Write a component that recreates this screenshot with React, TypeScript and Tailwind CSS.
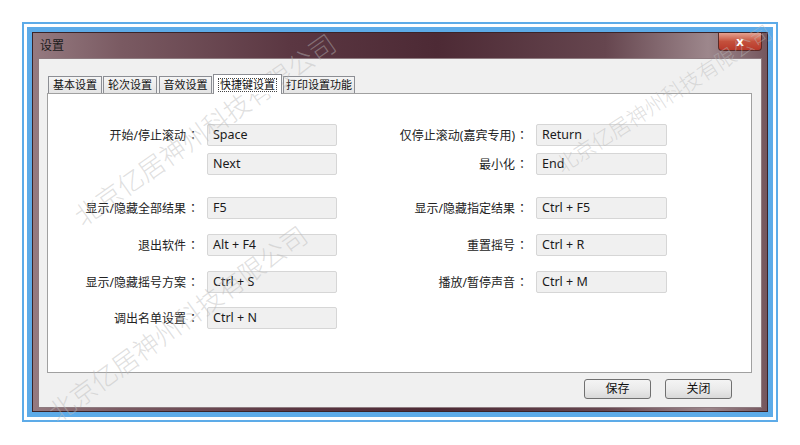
import type { ReactNode } from 'react'

type Row = {
  mt: string
  left: [string, string]
  right: [string, string] | null
}

const rows: Row[] = [
  { mt: 'mt-[30px]', left: ['开始/停止滚动', 'Space'], right: ['仅停止滚动(嘉宾专用)', 'Return'] },
  { mt: 'mt-[7px]', left: ['', 'Next'], right: ['最小化', 'End'] },
  { mt: 'mt-[22px]', left: ['显示/隐藏全部结果', 'F5'], right: ['显示/隐藏指定结果', 'Ctrl + F5'] },
  { mt: 'mt-[15px]', left: ['退出软件', 'Alt + F4'], right: ['重置摇号', 'Ctrl + R'] },
  { mt: 'mt-[15px]', left: ['显示/隐藏摇号方案', 'Ctrl + S'], right: ['播放/暂停声音', 'Ctrl + M'] },
  { mt: 'mt-[14px]', left: ['调出名单设置', 'Ctrl + N'], right: null },
]

const tabs = [
  { label: '基本设置', cls: 'ml-[1px] w-[54px]' },
  { label: '轮次设置', cls: 'ml-[1px] w-[54px]' },
  { label: '音效设置', cls: 'ml-[2px] w-[53px]' },
  { label: '快捷键设置', cls: 'ml-[1px] w-[69px]', active: true },
  { label: '打印设置功能', cls: 'ml-[1px] w-[72px]' },
]

function Label({ text, width }: { text: string; width: string }) {
  return (
    <div className={`${width} whitespace-nowrap text-right`}>
      {text && (
        <>
          {text}
          <span className="inline-block w-[14px] text-center font-['Noto_Sans_CJK_TC',sans-serif]">：</span>
        </>
      )}
    </div>
  )
}

function KeyBox({ value, width }: { value: string; width: string }) {
  return (
    <div
      className={`flex h-[22px] ${width} items-center rounded-[2px] border border-[#d6d6d6] bg-[#f0f0f0] px-[5px] text-[12.5px] text-[#1a1a1a]`}
    >
      {value}
    </div>
  )
}

function Watermark({ x, y, angle, size }: { x: string; y: string; angle: string; size: string }) {
  return (
    <div className={`pointer-events-none absolute ${x} ${y} h-0 w-0`}>
      <span
        className={`absolute left-0 top-0 -translate-x-1/2 -translate-y-1/2 ${angle} ${size} whitespace-nowrap font-light text-[rgba(185,185,185,0.45)]`}
      >
        北京亿居神州科技有限公司
      </span>
    </div>
  )
}

function Button({ children }: { children: ReactNode }) {
  return (
    <button
      type="button"
      className="flex h-[20px] w-[67px] items-center justify-center rounded-[3px] border border-[#707070] bg-gradient-to-b from-[#f4f4f4] via-[#ebebeb] to-[#d9d9d9] text-[12px] text-[#111]"
    >
      {children}
    </button>
  )
}

export default function App() {
  return (
    <div className="relative h-[445px] w-[800px] overflow-hidden bg-white pl-[22px] pt-[22px] font-['Noto_Sans','Noto_Sans_CJK_SC',sans-serif]">
      <div className="h-[400px] w-[756px] border-2 border-[#5dabe8] p-[3px]">
        <div className="h-full w-full border-[5px] border-[#5dabe8]">
          {/* window */}
          <div className="flex h-full w-full flex-col border border-[#3a2429] bg-[linear-gradient(90deg,#957a80_0%,#7a5a62_12%,#5b3742_35%,#4d2a35_55%,#66464f_78%,#9d878c_92%,#75575e_100%)] px-[5px] pb-[3px]">
            <div className="flex h-[25px] shrink-0 items-start justify-between">
              <span className="mt-[6px] pl-[2px] text-[12px] leading-[14px] text-[#1c1c1c]">设置</span>
              <div className="flex h-[18px] w-[44px] items-center justify-center rounded-b-[4px] border border-t-0 border-[#5a2a26] bg-gradient-to-b from-[#e4a190] via-[#c4503c] to-[#b8382a] text-[13px] font-bold leading-none text-white">
                x
              </div>
            </div>
            {/* client area */}
            <div className="flex flex-1 flex-col border border-[#8e7b80] bg-[#f0f0f0] pl-[8px] pr-[9px] pt-[15px]">
              <div className="flex h-[19px] items-end">
                {tabs.map((t) =>
                  t.active ? (
                    <div
                      key={t.label}
                      className={`relative z-10 -mb-px flex h-[20px] ${t.cls} items-center justify-center whitespace-nowrap border border-b-0 border-[#8c8e94] bg-white text-[11px] text-[#111]`}
                    >
                      <span className="border border-dotted border-[#444] px-[1px] leading-[12px]">{t.label}</span>
                    </div>
                  ) : (
                    <div
                      key={t.label}
                      className={`flex h-[17px] ${t.cls} items-center justify-center whitespace-nowrap border border-b-0 border-[#8c8e94] bg-gradient-to-b from-[#f5f5f5] to-[#e4e4e4] text-[11px] text-[#111]`}
                    >
                      {t.label}
                    </div>
                  ),
                )}
              </div>
              <div className="h-[280px] border border-[#a0a0a0] bg-white">
                {rows.map((r, i) => (
                  <div key={i} className={`flex items-center ${r.mt} text-[12px] text-[#222]`}>
                    <Label text={r.left[0]} width="w-[152px]" />
                    <div className="ml-[7px]">
                      <KeyBox value={r.left[1]} width="w-[130px]" />
                    </div>
                    {r.right && (
                      <>
                        <Label text={r.right[0]} width="w-[192px]" />
                        <div className="ml-[7px]">
                          <KeyBox value={r.right[1]} width="w-[131px]" />
                        </div>
                      </>
                    )}
                  </div>
                ))}
              </div>
              <div className="mt-[6px] flex justify-end gap-[14px] pr-[20px]">
                <Button>保存</Button>
                <Button>关闭</Button>
              </div>
            </div>
          </div>
        </div>
      </div>

      <Watermark x="left-[205px]" y="top-[130px]" angle="-rotate-[35deg]" size="text-[26px]" />
      <Watermark x="left-[178px]" y="top-[324px]" angle="-rotate-[36deg]" size="text-[26px]" />
      <Watermark x="left-[664px]" y="top-[99px]" angle="-rotate-[33deg]" size="text-[21px]" />
    </div>
  )
}
